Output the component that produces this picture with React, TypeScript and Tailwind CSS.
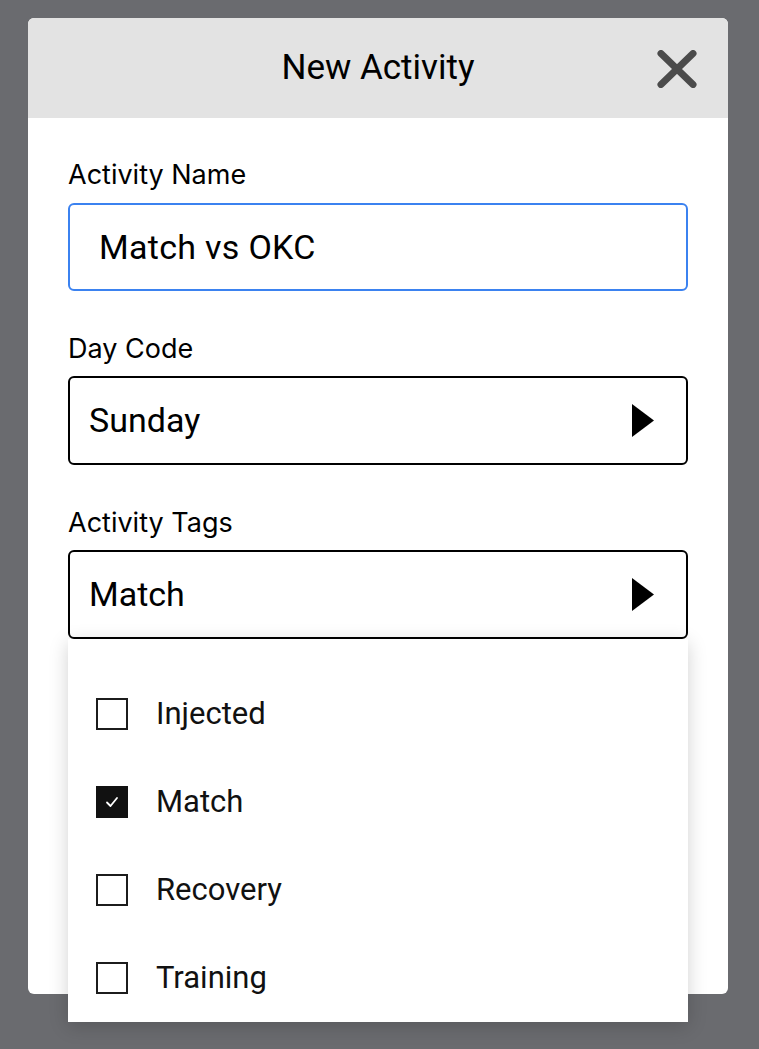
import React from 'react';

const tags = [
  { name: 'Injected', checked: false },
  { name: 'Match', checked: true },
  { name: 'Recovery', checked: false },
  { name: 'Training', checked: false },
];

const Caret = () => (
  <svg width="22" height="33" viewBox="0 0 22 33" className="shrink-0">
    <polygon points="0,0 22,16.5 0,33" fill="#000" />
  </svg>
);

const Checkbox = ({ checked }: { checked: boolean }) =>
  checked ? (
    <div className="w-8 h-8 bg-[#111] flex items-center justify-center shrink-0">
      <svg width="14" height="12" viewBox="0 0 14 12">
        <path d="M2 6.5 L5.5 10 L12 2" fill="none" stroke="#fff" strokeWidth="1.8" strokeLinecap="round" strokeLinejoin="round" />
      </svg>
    </div>
  ) : (
    <div className="w-8 h-8 border-2 border-[#1c1c1c] bg-white shrink-0" />
  );

const labelCls = "text-[27px] leading-8 text-black font-['Inter',sans-serif]";

export default function App() {
  return (
    <div
      className="w-full h-[1049px] bg-[#6a6b6f] pt-[18px] px-[28px] overflow-hidden"
      style={{ fontFamily: 'Roboto, "Liberation Sans", sans-serif' }}
    >
      <div className="relative w-[700px] h-[976px] bg-white rounded-md">
        {/* Header */}
        <div className="relative h-[100px] bg-[#e3e3e3] rounded-t-md flex items-center justify-center">
          <span className="text-[35px] text-black">New Activity</span>
          <button className="absolute right-[31px] top-[32px] w-[40px] h-[38px]">
            <svg width="40" height="38" viewBox="0 0 40 38">
              <path d="M4 3.5 L36 34.5 M36 3.5 L4 34.5" stroke="#4b4b4b" strokeWidth="7" strokeLinecap="round" />
            </svg>
          </button>
        </div>

        {/* Body */}
        <div className="px-10 pt-[41px] flex flex-col">
          <label className={labelCls}>Activity Name</label>
          <div className="mt-3 h-[88px] border-2 border-[#3b82f0] rounded-md flex items-center pl-[29px]">
            <span className="text-[34px] tracking-[0.3px] text-black">Match vs OKC</span>
          </div>

          <label className={`mt-[42px] ${labelCls}`}>Day Code</label>
          <div className="mt-[11px] h-[89px] border-2 border-black rounded-md flex items-center justify-between pl-[19px] pr-[32px]">
            <span className="text-[34px] text-black">Sunday</span>
            <Caret />
          </div>

          <label className={`mt-[42px] ${labelCls}`}>Activity Tags</label>
          <div className="relative mt-[11px] h-[89px] border-2 border-black rounded-md flex items-center justify-between pl-[19px] pr-[32px]">
            <span className="text-[34px] text-black">Match</span>
            <Caret />
            {/* Dropdown menu */}
            <div className="absolute left-[-2px] right-[-2px] top-[87px] h-[383px] bg-white shadow-[0_4px_18px_rgba(0,0,0,0.18)] pt-[31px] z-10">
              {tags.map((t) => (
                <div key={t.name} className="h-[88px] flex items-center pl-[28px] gap-[28px]">
                  <Checkbox checked={t.checked} />
                  <span className="text-[31px] text-[#111]">{t.name}</span>
                </div>
              ))}
            </div>
          </div>
        </div>
      </div>
    </div>
  );
}
